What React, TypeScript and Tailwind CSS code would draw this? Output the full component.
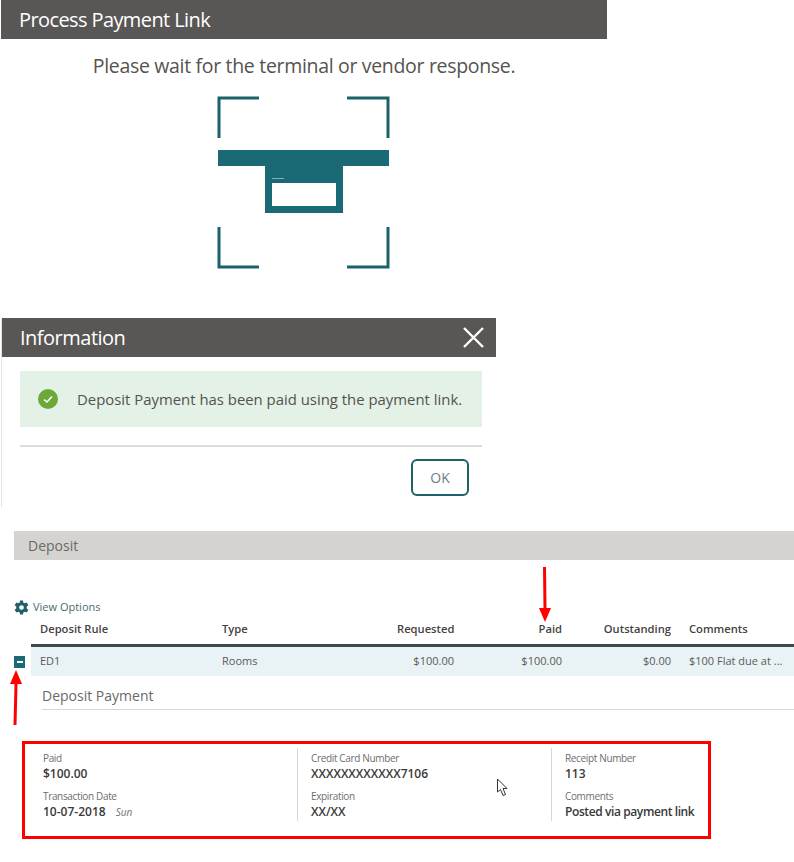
const font = "font-['Open_Sans','Noto_Sans',sans-serif]";

function CardScan() {
  return (
    <svg width="174" height="174" viewBox="0 0 174 174" className="block" fill="none">
      <g stroke="#1d626b" strokeWidth="3">
        <path d="M42 2H2V42" />
        <path d="M130 2H171V42" />
        <path d="M2 131V171H42" />
        <path d="M171 131V171H130" />
      </g>
      <rect x="1" y="54" width="171" height="16" fill="#1a6a75" />
      <rect x="48" y="54" width="78" height="63" fill="#1a6a75" />
      <rect x="55" y="87" width="64" height="23" fill="#ffffff" />
      <rect x="55" y="82" width="12" height="1" fill="#7fb0b6" />
    </svg>
  );
}

function Field({ label, value, extra, mt, tight }: { label: string; value: string; extra?: string; mt?: boolean; tight?: boolean }) {
  return (
    <div className={mt ? "mt-[6px]" : ""}>
      <div className="text-[10px] leading-[14px] tracking-[-0.35px] text-[#6f6d6b]">{label}</div>
      <div className={`flex items-baseline gap-[10px] text-[12px] leading-[18px] font-semibold text-[#3a3938] ${tight ? "tracking-[-0.4px]" : ""}`}>
        <span>{value}</span>
        {extra && <span className="text-[10px] font-normal italic text-[#6f6d6b]">{extra}</span>}
      </div>
    </div>
  );
}

export default function App() {
  return (
    <div className={`${font} relative h-[862px] w-[794px] overflow-hidden bg-white`}>
      {/* Process Payment Link */}
      <section className="ml-px h-[277px] w-[606px]">
        <header className="flex h-[39px] items-center bg-[#595755] pl-[18px] text-[20px] tracking-[-0.6px] text-white">Process Payment Link</header>
        <p className="mt-[13px] text-center text-[19.5px] leading-[28px] tracking-[-0.32px] text-[#55534f]">Please wait for the terminal or vendor response.</p>
        <div className="mt-[16px] ml-[216px]">
          <CardScan />
        </div>
      </section>

      {/* Information */}
      <section className="mt-[41px] ml-px h-[189px] w-[495px] border-l border-[#e4e4e4]">
        <header className="flex h-[39px] items-center justify-between bg-[#595755] pr-[12px] pl-[18px] text-[20px] tracking-[-0.5px] text-white">
          <span>Information</span>
          <svg width="21" height="21" viewBox="0 0 21 21" stroke="#ffffff" strokeWidth="2.4" fill="none">
            <path d="M1 1L20 20M20 1L1 20" />
          </svg>
        </header>
        <div className="mt-[14px] ml-[18px] flex h-[56px] w-[462px] items-center bg-[#e3f1e6] pl-[18px] text-[14.9px] text-[#55534f]">
          <svg width="20" height="20" viewBox="0 0 20 20">
            <circle cx="10" cy="10" r="10" fill="#6ca83a" />
            <path d="M6 10.5L9 13L14 7.5" stroke="#ffffff" strokeWidth="1.6" fill="none" />
          </svg>
          <span className="ml-[19px]">Deposit Payment has been paid using the payment link.</span>
        </div>
        <div className="mt-[18px] ml-[18px] w-[462px] border-t-2 border-[#dcdcdc]" />
        <div className="mt-[12px] flex w-[467px] justify-end">
          <button className="h-[37px] w-[58px] rounded-[6px] border-2 border-[#1d626b] text-[14px] text-[#6a7d80]">OK</button>
        </div>
      </section>

      {/* Deposit */}
      <section className="mt-[24px] pl-[14px]">
        <div className="flex h-[29px] items-center bg-[#d5d3d0] pl-[14px] text-[14px] text-[#6b6966]">Deposit</div>
        <div className="mt-[39px] flex h-[16px] items-center text-[11px] text-[#4a6a70]">
          <svg width="15" height="15" viewBox="3.5 2.5 19 19" fill="#1d626b">
            <path fillRule="evenodd" d="M19.6 13.2a7.6 7.6 0 0 0 0-2.4l2.1-1.5-2.1-3.6-2.5 1a7.6 7.6 0 0 0-1.9-1.1L14.9 3h-3.8l-.3 2.6a7.6 7.6 0 0 0-1.9 1.1l-2.5-1-2.1 3.6 2.1 1.5a7.6 7.6 0 0 0 0 2.4l-2.1 1.5 2.1 3.6 2.5-1a7.6 7.6 0 0 0 1.9 1.1l.3 2.6h3.8l.3-2.6a7.6 7.6 0 0 0 1.9-1.1l2.5 1 2.1-3.6zM13 15a3 3 0 1 1 0-6 3 3 0 0 1 0 6z" />
          </svg>
          <span className="ml-[4px]">View Options</span>
        </div>

        <div className="flex">
          <div className="flex w-[17px] flex-col">
            <div className="h-[32px]" />
            <div className="flex h-[29px] items-center">
              <div className="flex h-[12px] w-[11px] items-center justify-center bg-[#1a6a75]">
                <div className="h-[2px] w-[6px] bg-white" />
              </div>
            </div>
          </div>
          <div className="flex-1">
            <div className="flex h-[32px] items-center border-b-[3px] border-[#3d4a4c] pl-[9px] text-[11.2px] font-semibold text-[#45423f]">
              <span className="w-[182px]">Deposit Rule</span>
              <span className="w-[175px]">Type</span>
              <span className="w-[57px] text-right">Requested</span>
              <span className="w-[108px] text-right">Paid</span>
              <span className="w-[109px] text-right">Outstanding</span>
              <span className="ml-[18px]">Comments</span>
            </div>
            <div className="flex h-[29px] items-center bg-[#e9f2f4] pl-[9px] text-[11px] text-[#5c5a57]">
              <span className="w-[182px]">ED1</span>
              <span className="w-[175px]">Rooms</span>
              <span className="w-[57px] text-right">$100.00</span>
              <span className="w-[108px] text-right">$100.00</span>
              <span className="w-[109px] text-right">$0.00</span>
              <span className="ml-[18px]">$100 Flat due at ...</span>
            </div>
            <div className="ml-[11px] flex h-[34px] items-center border-b border-[#d6d6d6] pt-[6px] text-[14px] text-[#6b6966]">Deposit Payment</div>
          </div>
        </div>
      </section>

      <div className="mt-[31px] ml-[22px] flex h-[98px] w-[689px] border-[3px] border-[#ff0000] pt-[4px] pb-[16px]">
        <div className="flex h-[73px] w-[273px] flex-col border-r border-[#d8d8d8] pt-[3px] pl-[18px]">
          <Field label="Paid" value="$100.00" />
          <Field label="Transaction Date" value="10-07-2018" extra="Sun" mt />
        </div>
        <div className="flex h-[73px] w-[254px] flex-col border-r border-[#d8d8d8] pt-[3px] pl-[13px]">
          <Field label="Credit Card Number" value="XXXXXXXXXXXX7106" />
          <Field label="Expiration" value="XX/XX" mt />
        </div>
        <div className="flex flex-col pt-[3px] pl-[13px]">
          <Field label="Receipt Number" value="113" />
          <Field label="Comments" value="Posted via payment link" mt tight />
        </div>
      </div>

      {/* Annotation arrows */}
      <svg className="absolute top-[567px] left-[538px]" width="14" height="56" viewBox="0 0 14 56">
        <path d="M5 0H8L8.5 41H13L7 55L1 41H5.5Z" fill="#ff0000" />
      </svg>
      <svg className="absolute top-[670px] left-[9px]" width="14" height="56" viewBox="0 0 14 56">
        <path d="M7 0L13 14H8.5L7.5 55H4.5L5.5 14H1Z" fill="#ff0000" />
      </svg>
      {/* Mouse cursor */}
      <svg className="absolute top-[778px] left-[496px]" width="14" height="19" viewBox="0 0 14 19">
        <path d="M1.5 1V14L4.5 11.5L7 17.5L9.5 16.5L7 10.5H11Z" fill="#ffffff" stroke="#333333" strokeWidth="1" />
      </svg>
    </div>
  );
}
